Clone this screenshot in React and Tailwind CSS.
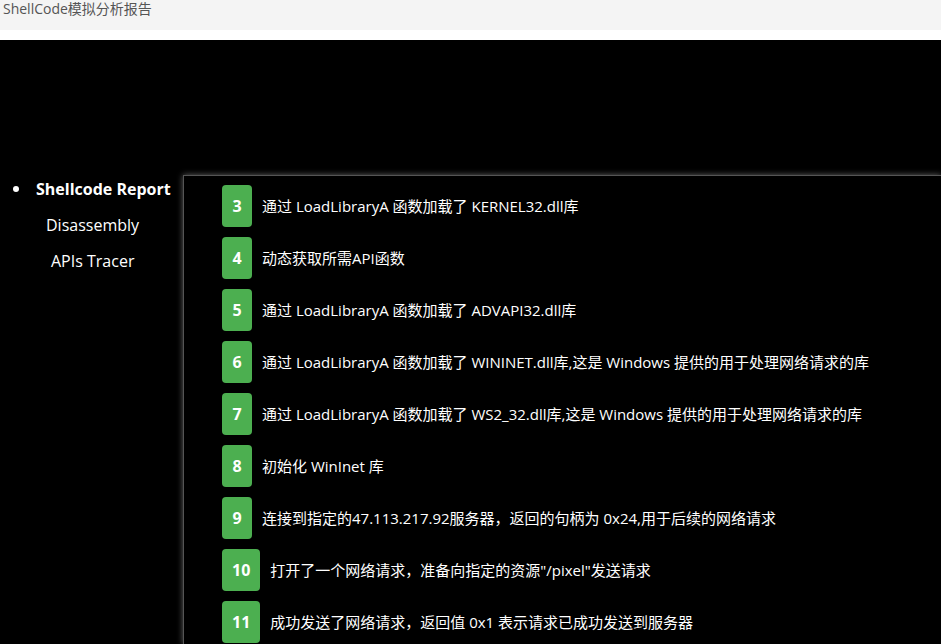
export default function App() {
  const rows = [
    ["3", "通过 LoadLibraryA 函数加载了 KERNEL32.dll库"],
    ["4", "动态获取所需API函数"],
    ["5", "通过 LoadLibraryA 函数加载了 ADVAPI32.dll库"],
    ["6", "通过 LoadLibraryA 函数加载了 WININET.dll库,这是 Windows 提供的用于处理网络请求的库"],
    ["7", "通过 LoadLibraryA 函数加载了 WS2_32.dll库,这是 Windows 提供的用于处理网络请求的库"],
    ["8", "初始化 WinInet 库"],
    ["9", "连接到指定的47.113.217.92服务器，返回的句柄为 0x24,用于后续的网络请求"],
    ["10", "打开了一个网络请求，准备向指定的资源\"/pixel\"发送请求"],
    ["11", "成功发送了网络请求，返回值 0x1 表示请求已成功发送到服务器"],
  ];
  return (
    <div className="w-[941px] h-[644px] overflow-hidden bg-black flex flex-col" style={{ fontFamily: '"Open Sans", "Noto Sans CJK SC", sans-serif' }}>
      <div className="h-[30px] bg-[#f4f4f4] px-[3px] text-[14px] text-[#555] leading-[18px] pt-0 shrink-0">ShellCode模拟分析报告</div>
      <div className="h-[10px] bg-white shrink-0" />
      <div className="flex flex-1 pt-[135px]">
        <ul className="w-[183px] shrink-0 text-white text-[16px] pt-[8px]">
          <li className="flex items-center h-[36px] -mt-[12px]">
            <span className="ml-[13px] w-[6px] h-[6px] rounded-full bg-white" />
            <span className="ml-[17px] font-bold">Shellcode Report</span>
          </li>
          <li className="h-[36px] flex items-center pl-[46px]">Disassembly</li>
          <li className="h-[36px] flex items-center pl-[51px]">APIs Tracer</li>
        </ul>
        <div className="flex-1 border-l border-t border-[#555] shadow-[0_0_6px_rgba(200,200,200,0.5)] pl-[38px] pt-[9px] flex flex-col gap-[10px]">
          {rows.map(([n, t]) => (
            <div key={n} className="flex items-center h-[42px]">
              <div className="h-[42px] px-[10px] min-w-[30px] rounded-[4px] bg-[#4caf50] text-white font-bold text-[16px] flex items-center justify-center">{n}</div>
              <div className="ml-[10px] text-white text-[15px] whitespace-nowrap">{t}</div>
            </div>
          ))}
        </div>
      </div>
    </div>
  );
}
